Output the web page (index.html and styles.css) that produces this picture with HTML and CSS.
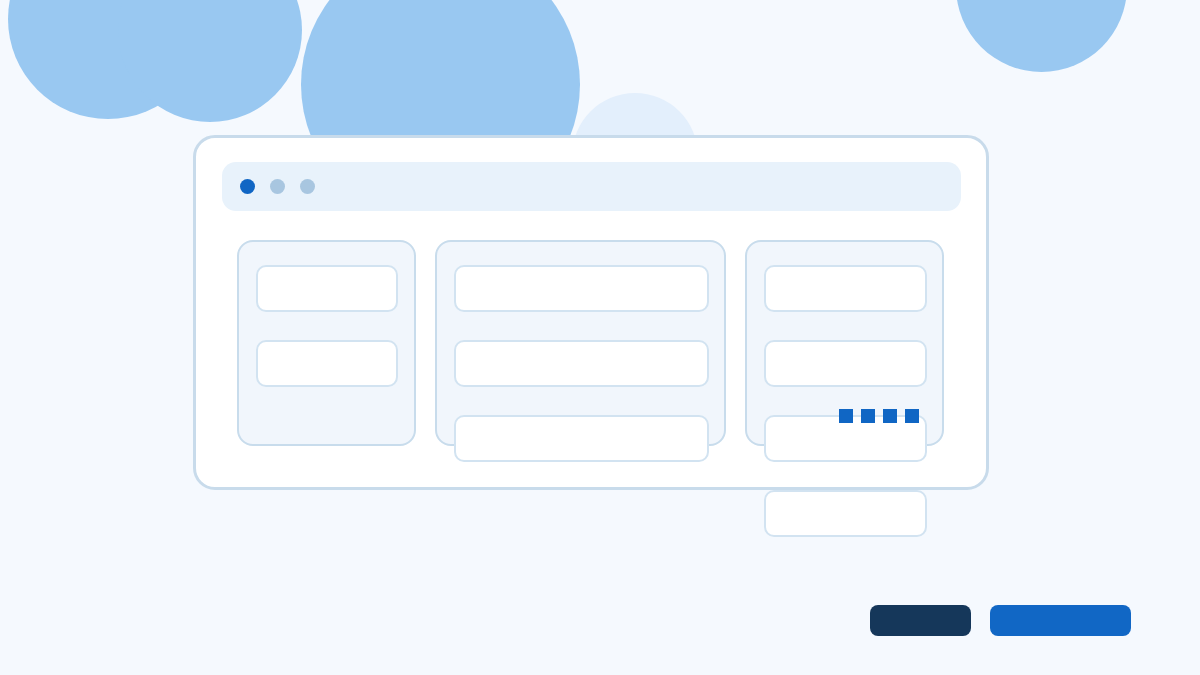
FILE: index.html
```html
<!DOCTYPE html>
<html>
<head>
<meta charset="utf-8">
<link rel="stylesheet" href="styles.css">
</head>
<body>
<div class="stage">
  <div class="blob blob-a"></div>
  <div class="blob blob-b"></div>
  <div class="blob blob-c"></div>
  <div class="blob blob-d"></div>
  <div class="blob blob-e"></div>

  <div class="window">
    <div class="bar">
      <span class="dot dot-active"></span>
      <span class="dot"></span>
      <span class="dot"></span>
    </div>
    <div class="columns">
      <div class="col col-1">
        <div class="card"></div>
        <div class="card"></div>
      </div>
      <div class="col col-2">
        <div class="card"></div>
        <div class="card"></div>
        <div class="card"></div>
      </div>
      <div class="col col-3">
        <div class="card"></div>
        <div class="card"></div>
        <div class="card"></div>
        <div class="card"></div>
        <div class="squares">
          <span></span><span></span><span></span><span></span>
        </div>
      </div>
    </div>
  </div>

  <div class="actions">
    <div class="btn btn-dark"></div>
    <div class="btn btn-blue"></div>
  </div>
</div>
</body>
</html>
```
FILE: styles.css
```css
* { box-sizing: border-box; }
html, body { margin: 0; padding: 0; }
body {
  width: 1200px;
  height: 675px;
  overflow: hidden;
  background: #f5f9fe;
  font-family: "Liberation Sans", Arial, sans-serif;
}
.stage {
  position: relative;
  width: 1200px;
  height: 675px;
  padding-top: 135px;
}
.blob {
  position: absolute;
  border-radius: 50%;
  background: #99c8f1;
  z-index: 0;
}
.blob-a { left: 8px; top: -81px; width: 200px; height: 200px; }
.blob-b { left: 118px; top: -62px; width: 184px; height: 184px; }
.blob-c { left: 301px; top: -55px; width: 279px; height: 279px; }
.blob-d { left: 572px; top: 93px; width: 126px; height: 126px; background: #e3effc; }
.blob-e { left: 956px; top: -99px; width: 171px; height: 171px; }

.window {
  position: relative;
  z-index: 1;
  margin-left: 193px;
  width: 796px;
  height: 355px;
  background: #ffffff;
  border: 3px solid #c8dbeb;
  border-radius: 22px;
  padding: 24px 0 0 26px;
}
.bar {
  width: 739px;
  height: 49px;
  background: #e8f2fb;
  border-radius: 14px;
  display: flex;
  align-items: center;
  gap: 15px;
  padding-left: 18px;
}
.dot {
  width: 15px;
  height: 15px;
  border-radius: 50%;
  background: #a8c6e0;
}
.dot-active { background: #1066c4; }

.columns {
  display: flex;
  gap: 19px;
  margin-top: 29px;
  margin-left: 15px;
  align-items: flex-start;
}
.col {
  position: relative;
  height: 206px;
  background: #f1f6fc;
  border: 2px solid #c8dcec;
  border-radius: 16px;
  padding: 23px 0 0 17px;
  display: flex;
  flex-direction: column;
  gap: 28px;
}
.col-1 { width: 179px; }
.col-2 { width: 291px; }
.col-3 { width: 199px; }
.card {
  flex: none;
  height: 47px;
  background: #ffffff;
  border: 2px solid #d2e3f1;
  border-radius: 10px;
}
.col-1 .card { width: 142px; }
.col-2 .card { width: 255px; }
.col-3 .card { width: 163px; }

.squares {
  position: absolute;
  left: 92px;
  top: 167px;
  display: flex;
  gap: 8px;
  z-index: 2;
}
.squares span {
  width: 14px;
  height: 14px;
  background: #1066c4;
}

.actions {
  display: flex;
  justify-content: flex-end;
  gap: 19px;
  margin-top: 115px;
  padding-right: 69px;
}
.btn {
  height: 31px;
  border-radius: 8px;
}
.btn-dark { width: 101px; background: #15375a; }
.btn-blue { width: 141px; background: #1167c5; }
```
